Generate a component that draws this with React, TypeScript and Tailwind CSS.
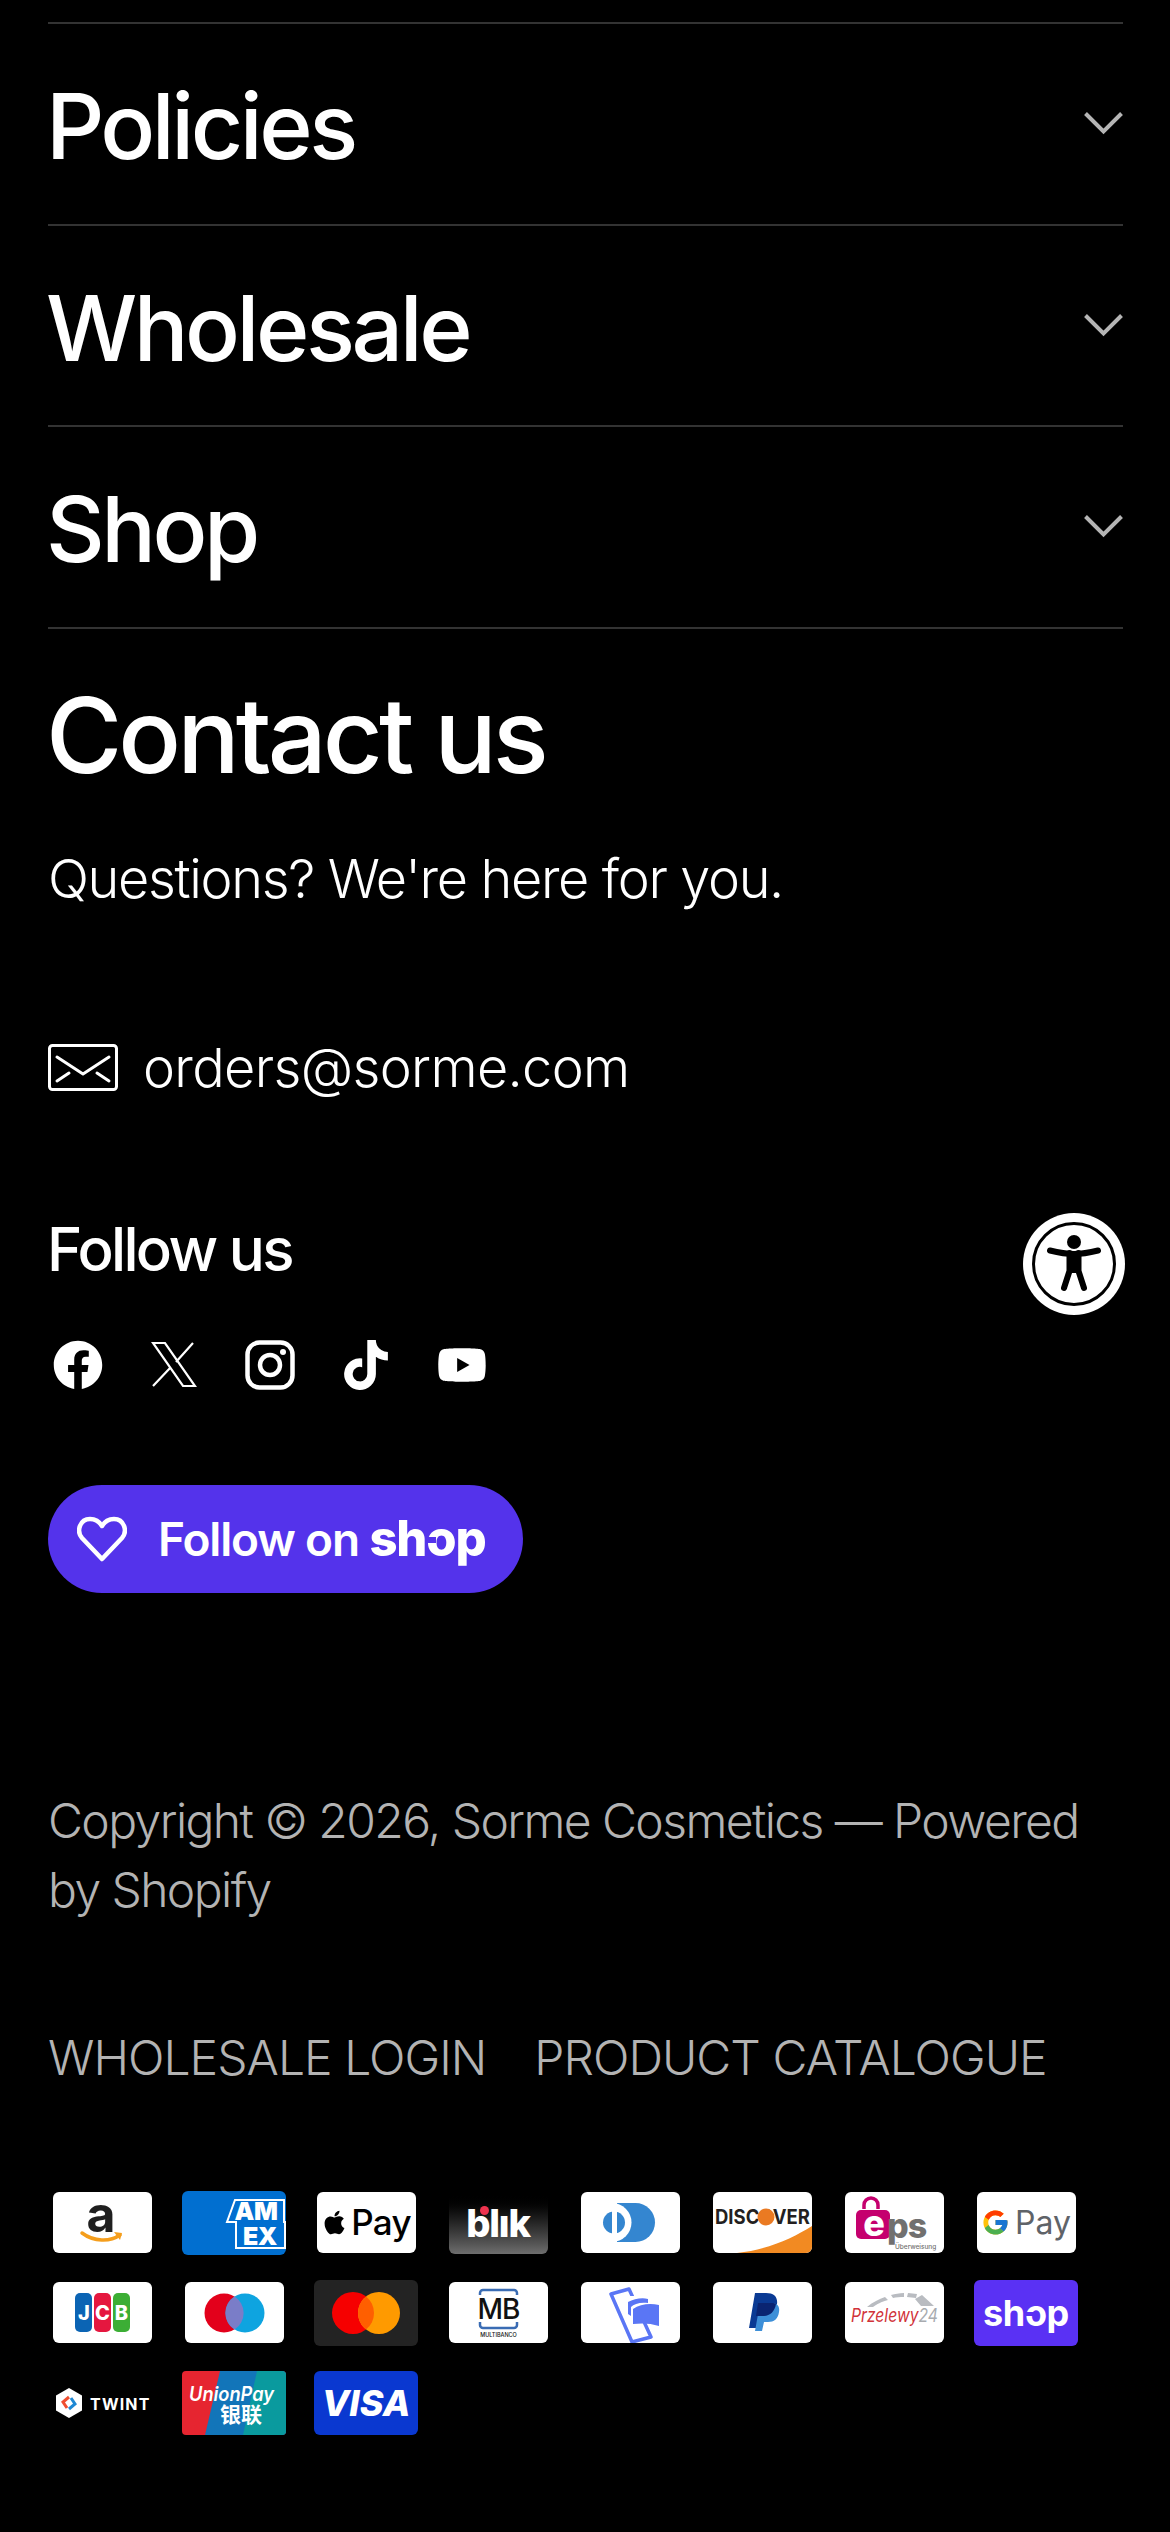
import React from 'react';
import { FaApple, FaFacebook, FaTiktok, FaYoutube } from 'react-icons/fa';
import { FcGoogle } from 'react-icons/fc';

const sans = 'Inter, sans-serif';

const AccordionRow: React.FC<{ title: string }> = ({ title }) => (
    <div className="flex h-[201.5px] items-center justify-between border-t-2 border-[#333333]">
        <h2 className="-ml-[2px] pt-[6px] text-[91px] font-medium leading-none tracking-[-0.038em] text-white">{title}</h2>
        <svg width="39" height="23" viewBox="0 0 39 23" fill="none" stroke="#b5b5b5" strokeWidth="4">
            <path d="M1.500 1.500l18 18 18-18" />
        </svg>
    </div>
);

const Envelope = () => (
    <svg width="70" height="47" viewBox="0 0 70 47" fill="none" stroke="white" strokeWidth="3" strokeLinecap="round" strokeLinejoin="round">
        <rect x="1.500" y="1.500" width="67" height="44" rx="3" />
        <path d="M9 13l26 17 26-17M9 37l12-8M61 37l-12-8" />
    </svg>
);

const XLogo = () => (
    <svg width="46" height="47" viewBox="0 0 46 47" fill="none" stroke="white" strokeWidth="2.200">
        <path d="M2 2h12l30 43H32zM42 2L25 21M20 26L2 45" />
    </svg>
);

const Instagram = () => (
    <svg width="50" height="50" viewBox="0 0 50 50" fill="none" stroke="white">
        <rect x="2.500" y="2.500" width="45" height="45" rx="12" strokeWidth="4.500" />
        <circle cx="25" cy="25" r="10" strokeWidth="4.500" />
        <circle cx="38" cy="12" r="3" fill="white" stroke="none" />
    </svg>
);

const Social: React.FC<{ children: React.ReactNode }> = ({ children }) => (
    <div className="flex h-[56px] w-[50px] items-center justify-center">{children}</div>
);

const Accessibility = () => (
    <div className="fixed left-[1023px] top-[1213px] flex h-[102px] w-[102px] items-center justify-center rounded-full bg-white">
        <svg width="84" height="84" viewBox="0 0 84 84">
            <circle cx="42" cy="42" r="40.500" fill="white" stroke="black" strokeWidth="3" />
            <circle cx="42" cy="20" r="7" fill="black" />
            <path d="M18 28.500c8 2 16 3.500 24 3.500s16-1.500 24-3.500" fill="none" stroke="black" strokeWidth="6" strokeLinecap="round" />
            <path d="M37.500 31v18L32 66M46.500 31v18L52 66" fill="none" stroke="black" strokeWidth="6" strokeLinecap="round" />
            <rect x="36" y="31" width="12" height="20" fill="black" />
        </svg>
    </div>
);

// White payment card, sits inside a 104 wide cell
const Card: React.FC<{ children: React.ReactNode }> = ({ children }) => (
    <div className="flex h-[66px] w-[104px] items-center justify-center">
        <div className="relative flex h-[61px] w-[99px] items-center justify-center overflow-hidden rounded-[6px] bg-white">{children}</div>
    </div>
);

const Cell: React.FC<{ children: React.ReactNode }> = ({ children }) => (
    <div className="flex h-[66px] w-[104px] items-center justify-center">{children}</div>
);

const Amazon = () => (
    <Card>
        <span className="absolute left-[34px] top-[2px] text-[50px] font-bold leading-[40px] text-[#1f1f1f]" style={{ fontFamily: sans }}>a</span>
        <svg className="absolute left-0 top-0" width="99" height="61" viewBox="0 0 99 61">
            <path d="M29 41c12 9 28 9 38 2" fill="none" stroke="#f59e1c" strokeWidth="3.500" strokeLinecap="round" />
            <path d="M61 40l8 1-2 7z" fill="#f59e1c" />
        </svg>
    </Card>
);

const Amex = () => (
    <Cell>
        <svg width="104" height="64" viewBox="0 0 104 64">
            <rect width="104" height="64" rx="6" fill="#016fd0" />
            <path d="M53 9h49v22h1v26H54V31h-9z" fill="none" stroke="white" strokeWidth="2" />
            <text x="74" y="29" textAnchor="middle" fontFamily={sans} fontWeight="900" fontSize="25" fill="white" letterSpacing="-0.500">AM</text>
            <text x="78" y="54" textAnchor="middle" fontFamily={sans} fontWeight="900" fontSize="25" fill="white" letterSpacing="-0.500">EX</text>
        </svg>
    </Cell>
);

const ApplePay = () => (
    <Card>
        <div className="flex items-center gap-[3px] text-black">
            <FaApple size={27} />
            <span className="text-[35px] font-medium leading-none tracking-[-0.02em]" style={{ fontFamily: sans }}>Pay</span>
        </div>
    </Card>
);

const Blik = () => (
    <Cell>
        <div className="relative flex h-[62px] w-[99px] items-center justify-center rounded-[6px] bg-linear-to-b from-black to-[#6e6e6e]">
            <span className="text-[38px] font-extrabold leading-none tracking-[-0.03em] text-white" style={{ fontFamily: sans }}>blık</span>
            <span className="absolute left-[31px] top-[14px] h-[9px] w-[9px] rounded-full bg-[#f0334e]" />
        </div>
    </Cell>
);

const Diners = () => (
    <Card>
        <svg width="99" height="61" viewBox="0 0 99 61">
            <path d="M36 11h18.500a19.500 19.500 0 010 39H36z" fill="#3486d0" />
            <circle cx="31" cy="30.500" r="19.500" fill="white" />
            <circle cx="33" cy="30.500" r="11" fill="#3486d0" />
            <rect x="31" y="18" width="5" height="25" fill="white" />
        </svg>
    </Card>
);

const Discover = () => (
    <Card>
        <svg width="99" height="61" viewBox="0 0 99 61">
            <path d="M24 61c30-3 56-15 75-27v27z" fill="#f28a22" />
            <text x="2" y="32" textLength="95" lengthAdjust="spacingAndGlyphs" fontFamily={sans} fontWeight="700" fontSize="20" fill="#231f20">DISCOVER</text>
            <circle cx="53" cy="25" r="8.500" fill="#ea7a22" />
        </svg>
    </Card>
);

const Eps = () => (
    <Card>
        <svg width="99" height="61" viewBox="0 0 99 61">
            <path d="M19 17v-4a7 7 0 0114 0v4" fill="none" stroke="#c5006e" strokeWidth="3.500" />
            <rect x="11" y="18" width="34" height="29" rx="5" fill="#c5006e" />
            <text x="29" y="44" textAnchor="middle" fontFamily={sans} fontWeight="800" fontSize="36" fill="white">e</text>
            <text x="42" y="46" fontFamily={sans} fontWeight="800" fontSize="34" fill="#71706f" letterSpacing="-1">ps</text>
            <text x="50" y="57" fontFamily={sans} fontWeight="500" fontSize="6.500" fill="#71706f">Überweisung</text>
        </svg>
    </Card>
);

const GooglePay = () => (
    <Card>
        <div className="flex items-center gap-[5px]">
            <FcGoogle size={29} />
            <span className="text-[32px] leading-none text-[#5f6368]" style={{ fontFamily: sans }}>Pay</span>
        </div>
    </Card>
);

const Jcb = () => (
    <Card>
        <svg width="99" height="61" viewBox="0 0 99 61">
            <rect x="22" y="11" width="17" height="39" rx="5" fill="#0b64b4" />
            <rect x="41" y="11" width="17" height="39" rx="5" fill="#e5173f" />
            <rect x="60" y="11" width="17" height="39" rx="5" fill="#3cae35" />
            <g fontFamily={sans} fontWeight="800" fontSize="20" fill="white" textAnchor="middle">
                <text x="31" y="38">J</text>
                <text x="49.500" y="38">C</text>
                <text x="68.500" y="38">B</text>
            </g>
        </svg>
    </Card>
);

const Maestro = () => (
    <Card>
        <svg width="99" height="61" viewBox="0 0 99 61">
            <circle cx="39" cy="31" r="19.500" fill="#e3001b" />
            <circle cx="60" cy="31" r="19.500" fill="#0ea4e0" />
            <path d="M49.500 14.500a19.500 19.500 0 010 33 19.500 19.500 0 010-33z" fill="#7a7dc8" />
        </svg>
    </Card>
);

const Mastercard = () => (
    <Cell>
        <svg width="104" height="66" viewBox="0 0 104 66">
            <rect width="104" height="66" rx="6" fill="#232323" />
            <circle cx="39" cy="33" r="21" fill="#f60000" />
            <circle cx="65" cy="33" r="21" fill="#ff9a00" />
            <path d="M52 16.500a21 21 0 010 33 21 21 0 010-33z" fill="#ff5f00" />
        </svg>
    </Cell>
);

const Multibanco = () => (
    <Card>
        <svg width="99" height="61" viewBox="0 0 99 61">
            <path d="M31 13v-2a3 3 0 013-3h31a3 3 0 013 3v2M31 40v3a3 3 0 003 3h31a3 3 0 003-3v-3" fill="none" stroke="#3a6cb4" strokeWidth="2.500" />
            <text x="49.500" y="37" textAnchor="middle" fontFamily={sans} fontWeight="500" fontSize="28" fill="#111" letterSpacing="-1">MB</text>
            <text x="49.500" y="55" textAnchor="middle" fontFamily={sans} fontWeight="500" fontSize="5.500" fill="#111">MULTIBANCO</text>
        </svg>
    </Card>
);

const BankCards = () => (
    <Card>
        <svg width="99" height="61" viewBox="0 0 99 61">
            <path d="M30 12l18-5 22 48-19 5z" fill="none" stroke="#5a76f5" strokeWidth="3.500" strokeLinejoin="round" />
            <rect x="45" y="14" width="20" height="22" fill="white" />
            <path d="M47 32v-12c6-3 14-5 20-3v4c-8-1-14 1-17 4v9z" fill="#5a76f5" />
            <path d="M52 42V27c7-5 17-6 26-4v21c-9-3-18-3-26-2z" fill="#5a76f5" />
        </svg>
    </Card>
);

const PayPal = () => (
    <Card>
        <svg width="99" height="61" viewBox="0 0 99 61">
            <path d="M42 11h11c8 0 12 4 11 11-1 8-6 12-13 12h-4l-2 12H36z" fill="#0a3a94" />
            <path d="M47 21h12c5 0 8 3 7 9-1 7-5 10-11 10h-4l-2 9h-7z" fill="#3d8fd8" />
            <path d="M45 21h14c2 0 3 0 4 1-1 7-6 12-12 12h-8z" fill="#0a2472" />
        </svg>
    </Card>
);

const Przelewy = () => (
    <Card>
        <svg width="99" height="61" viewBox="0 0 99 61">
            <path d="M22 25c6-5 12-8 18-10l3 3c-7 2-11 4-15 7zM46 13c4-1 8-2 13-2v4c-4 0-8 0-11 1zM63 11l9 1-1 4-9-1zM77 13l12 11H76l-6-7z" fill="#b9bcc1" />
            <text x="6" y="40" textLength="87" lengthAdjust="spacingAndGlyphs" fontFamily={sans} fontSize="19" fontStyle="italic" fill="#d13239">
                Przelewy<tspan fill="#a8abb0">24</tspan>
            </text>
        </svg>
    </Card>
);

const ShopPay = () => (
    <Cell>
        <div className="flex h-[66px] w-[104px] items-center justify-center rounded-[6px] bg-[#5a31f4]">
            <span className="relative inline-block text-[36px] font-bold leading-none tracking-[-0.01em] text-white" style={{ fontFamily: sans }}>
                shop
                <span className="absolute left-[43px] top-[17px] h-[4px] w-[8px] bg-[#5a31f4]" />
            </span>
        </div>
    </Cell>
);

const Twint = () => (
    <Cell>
        <svg width="104" height="34" viewBox="0 0 104 34">
            <path d="M19 2l13 7.500v15L19 32 6 24.500v-15z" fill="white" />
            <path d="M19 11l-6 5 4 6" fill="none" stroke="#f04e30" strokeWidth="3" />
            <path d="M19 23l6-5-4-6" fill="none" stroke="#1e88d4" strokeWidth="3" />
            <text x="40" y="24" fontFamily={sans} fontWeight="700" fontSize="16" fill="white" letterSpacing="1.200">TWINT</text>
        </svg>
    </Cell>
);

const UnionPay = () => (
    <Cell>
        <svg width="104" height="64" viewBox="0 0 104 64">
            <defs>
                <clipPath id="up">
                    <rect width="104" height="64" rx="4" />
                </clipPath>
            </defs>
            <g clipPath="url(#up)">
                <rect width="104" height="64" fill="#e62530" />
                <path d="M38 0h66v64H23z" fill="#1275b9" />
                <path d="M75 0h29v64H61z" fill="#0a9a9e" />
            </g>
            <text x="7" y="30" textLength="85" lengthAdjust="spacingAndGlyphs" fontFamily={sans} fontWeight="600" fontStyle="italic" fontSize="20" fill="white">UnionPay</text>
            <text x="38" y="51" fontFamily='"Noto Sans CJK SC", sans-serif' fontWeight="700" fontSize="21" fill="white">银联</text>
        </svg>
    </Cell>
);

const Visa = () => (
    <Cell>
        <div className="flex h-[64px] w-[104px] items-center justify-center rounded-[6px] bg-[#0a38d0]">
            <span className="text-[36px] font-extrabold italic leading-none text-white" style={{ fontFamily: sans }}>VISA</span>
        </div>
    </Cell>
);

export default function App() {
    return (
        <div className="h-[2532px] overflow-hidden bg-black pl-[48px] pr-[47px] pt-[22px]" style={{ fontFamily: sans }}>
            <div className="border-b-2 border-[#333333]">
                <AccordionRow title="Policies" />
                <AccordionRow title="Wholesale" />
                <AccordionRow title="Shop" />
            </div>

            <h2 className="mt-[54px] -ml-[2px] text-[104px] font-medium leading-none tracking-[-0.038em] text-white">Contact us</h2>
            <p className="mt-[65px] text-[54px] font-light leading-none tracking-[-0.025em] text-white">Questions? We're here for you.</p>

            <div className="mt-[135px] flex items-center gap-[25px]">
                <Envelope />
                <span className="text-[54px] font-light leading-none tracking-[-0.012em] text-white">orders@sorme.com</span>
            </div>

            <h3 className="mt-[124px] -ml-[1px] text-[60px] font-medium leading-none tracking-[-0.045em] text-white">Follow us</h3>

            <div className="mt-[58px] flex gap-[46px] pl-[5px]">
                <Social><FaFacebook size={50} color="white" /></Social>
                <Social><XLogo /></Social>
                <Social><Instagram /></Social>
                <Social><FaTiktok size={50} color="white" /></Social>
                <Social><FaYoutube size={52} color="white" /></Social>
            </div>

            <div className="mt-[92px] flex h-[108px] w-[475px] items-center gap-[31px] rounded-full bg-[#5433eb] pl-[29px]">
                <svg width="50" height="46" viewBox="0 0 50 46" fill="none" stroke="white" strokeWidth="4.500" strokeLinejoin="round">
                    <path d="M25 43L5 22C-1 15 3 3 13 3c5 0 9 2 12 7 3-5 7-7 12-7 10 0 14 12 8 19z" />
                </svg>
                <span className="text-[46px] font-semibold leading-none tracking-[-0.025em] text-white">
                    Follow on{' '}
                    <span className="relative inline-block text-[49px] font-extrabold">
                        shop
                        <span className="absolute left-[57px] top-[23px] h-[6px] w-[10px] bg-[#5433eb]" />
                    </span>
                </span>
            </div>

            <p className="mt-[193px] text-[48px] font-light leading-[69px] tracking-[-0.033em] text-[#b3b3b3]">
                Copyright © 2026, Sorme Cosmetics — Powered by Shopify
            </p>

            <div className="mt-[110px] flex gap-[48px] text-[48px] font-light leading-none tracking-[-0.02em] text-[#b3b3b3]">
                <span>WHOLESALE LOGIN</span>
                <span>PRODUCT CATALOGUE</span>
            </div>

            <div className="mt-[108px] ml-[2px] flex flex-wrap gap-x-[28px] gap-y-[24px]">
                <Amazon />
                <Amex />
                <ApplePay />
                <Blik />
                <Diners />
                <Discover />
                <Eps />
                <GooglePay />
                <Jcb />
                <Maestro />
                <Mastercard />
                <Multibanco />
                <BankCards />
                <PayPal />
                <Przelewy />
                <ShopPay />
                <Twint />
                <UnionPay />
                <Visa />
            </div>

            <Accessibility />
        </div>
    );
}
